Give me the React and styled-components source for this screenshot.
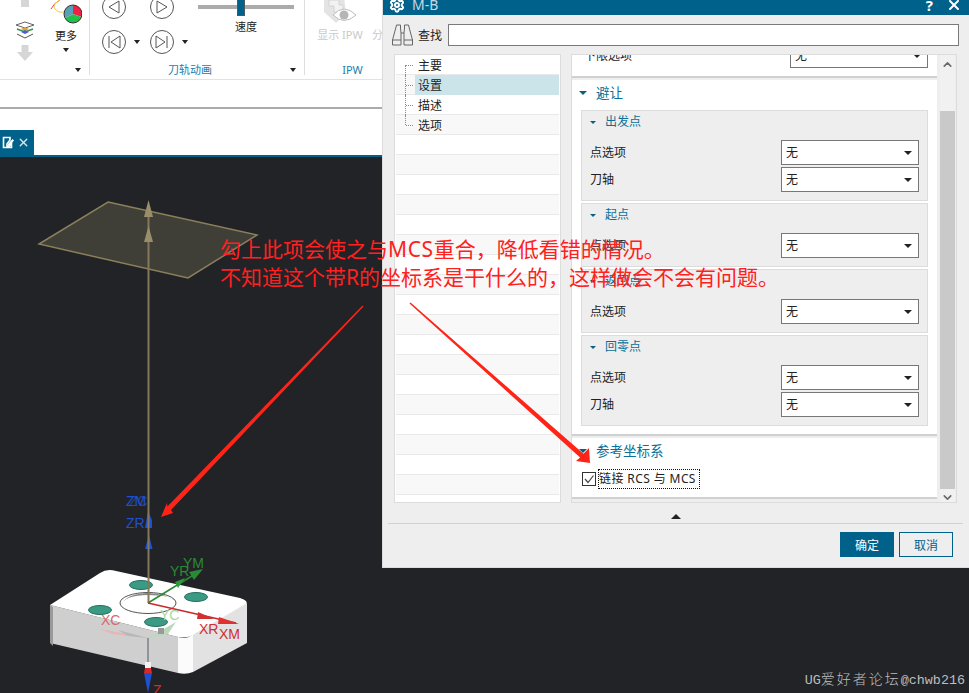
import React from 'react';
import styled, { createGlobalStyle } from 'styled-components';
import { Settings, X, ChevronUp, ChevronDown } from 'lucide-react';

const UI_FONT = '"Noto Sans", "Noto Sans CJK SC", sans-serif';
const BRAND = '#00618a';
const LINK = '#0b7096';

const GlobalStyle = createGlobalStyle`
  html, body {
    margin: 0;
    padding: 0;
    background: #fff;
  }
  body {
    font-family: ${UI_FONT};
    font-size: 12px;
    color: #222;
  }
`;

const Page = styled.div`
  position: relative;
  width: 969px;
  height: 693px;
  overflow: hidden;
  display: flex;
  flex-direction: column;
  background: #fff;
`;

/* ribbon */
const Ribbon = styled.div`
  flex: none;
  height: 79px;
  display: flex;
  align-items: flex-start;
  border-bottom: 1px solid #e2e2e2;
  overflow: hidden;
`;
const RibbonGroup = styled.div`
  flex: none;
  width: ${p => p.$width}px;
  height: 75px;
  box-sizing: border-box;
  display: flex;
  flex-direction: column;
  border-right: 1px solid #dedede;
`;
const GroupBody = styled.div`
  flex: none;
  height: 62px;
  display: flex;
  padding-left: ${p => p.$inset || 0}px;
`;
const GroupFooter = styled.div`
  flex: none;
  height: 13px;
  display: flex;
  align-items: center;
  padding-right: 8px;
  margin-top: 1px;
`;
const GroupLabel = styled.div`
  flex: 1;
  text-align: center;
  font-size: 11px;
  line-height: 13px;
  color: #1a80ae;
`;
const SmallCaret = styled.span`
  flex: none;
  display: block;
  width: 0;
  height: 0;
  border-left: 3.5px solid transparent;
  border-right: 3.5px solid transparent;
  border-top: 4px solid #222;
`;
const StackColumn = styled.div`
  width: 50px;
  display: flex;
  flex-direction: column;
  align-items: center;
  gap: 6px;
`;
const MoreColumn = styled.div`
  width: 32px;
  display: flex;
  flex-direction: column;
  align-items: center;
`;
const ToolText = styled.div`
  font-size: 11px;
  line-height: 16px;
  margin-top: ${p => p.$gap || 0}px;
  white-space: nowrap;
  color: ${p => (p.$muted ? '#c9c9c9' : '#222')};
`;
const MoreCaret = styled(SmallCaret)`
  margin-top: 4px;
`;
const MediaGrid = styled.div`
  width: 96px;
  margin-top: -5px;
  display: grid;
  grid-template-columns: 48px 48px;
  row-gap: 11px;
  align-content: start;
`;
const MediaCell = styled.div`
  height: 24px;
  display: flex;
  align-items: center;
  gap: 8px;
`;
const SliderColumn = styled.div`
  width: 96px;
  text-align: center;
`;
const SliderTrack = styled.div`
  position: relative;
  height: 4px;
  margin: 5px 0 10px;
  background: #ababab;
`;
const SliderThumb = styled.div`
  position: absolute;
  left: 39px;
  top: -12px;
  width: 6px;
  height: 21px;
  background: ${BRAND};
  border: 1px solid #4a5a62;
`;
const IpwColumn = styled.div`
  width: 48px;
  margin-left: 11px;
  display: flex;
  flex-direction: column;
  align-items: center;
`;
const SplitColumn = styled.div`
  margin-left: 8px;
  padding-top: 27px;
`;
const BlankStrip = styled.div`
  flex: none;
  height: 27px;
  border-bottom: 2px solid #ababab;
`;
const TabStrip = styled.div`
  flex: none;
  height: 46px;
  display: flex;
  align-items: flex-end;
  border-bottom: 2px solid ${BRAND};
`;
const ViewTab = styled.div`
  width: 34px;
  height: 25px;
  display: flex;
  align-items: center;
  gap: 2px;
  padding-left: 2px;
  box-sizing: border-box;
  background: ${BRAND};
  color: #d5e5ec;
`;

/* graphics window */
const Viewport = styled.div`
  flex: 1;
  min-height: 0;
  background: #222327;
`;
const SceneSvg = styled.svg`
  display: block;
`;
const SceneLabel = styled.text`
  font-family: "Liberation Sans", sans-serif;
  font-size: 14px;
  fill: ${p => p.$fill};
`;
const Watermark = styled.div`
  position: absolute;
  right: 4px;
  bottom: 3px;
  font-family: "Liberation Mono", "Noto Sans CJK SC", monospace;
  font-size: 13.4px;
  line-height: 18px;
  color: #bdbdbd;
  white-space: nowrap;
`;
const WatermarkCjk = styled.span`
  font-family: "Noto Sans CJK SC", sans-serif;
  font-weight: 300;
  font-size: 14px;
  letter-spacing: 2px;
`;

/* dialog */
const Dialog = styled.div`
  position: absolute;
  left: 382px;
  top: -13px;
  width: 587px;
  height: 581px;
  box-sizing: border-box;
  display: flex;
  flex-direction: column;
  background: #eeeeee;
  border-left: 1px solid #dcdcdc;
  border-bottom: 1px solid #dcdcdc;
`;
const TitleBar = styled.div`
  flex: none;
  height: 28px;
  box-sizing: border-box;
  display: flex;
  align-items: flex-start;
  padding: 10px 7px 0 6px;
  background: ${BRAND};
  color: #fff;
  overflow: hidden;
`;
const TitleText = styled.div`
  flex: 1;
  margin-left: 7px;
  font-size: 14px;
  line-height: 16px;
  color: #c4d9e3;
`;
const HelpMark = styled.div`
  margin-right: 13px;
  font-size: 15px;
  line-height: 16px;
  font-weight: 700;
`;
const FindRow = styled.div`
  flex: none;
  height: 22px;
  display: flex;
  align-items: center;
  margin: 9px 10px 8px 8px;
`;
const FindLabel = styled.div`
  margin: 0 6px 0 4px;
  font-size: 12px;
`;
const FindInput = styled.div`
  flex: 1;
  height: 22px;
  box-sizing: border-box;
  background: #fff;
  border: 1px solid #7a7a7a;
`;
const Panels = styled.div`
  flex: none;
  height: 449px;
  display: flex;
  margin-left: 11px;
  gap: 10px;
`;
const TreePanel = styled.div`
  flex: none;
  width: 167px;
  box-sizing: border-box;
  padding: 0 1px;
  background: #fff;
  border: 1px solid #dcdcdc;
  overflow: hidden;
`;
const TreeRow = styled.div`
  position: relative;
  height: 20px;
  box-sizing: border-box;
  padding-left: 22px;
  line-height: 21px;
  font-size: 12px;
  border-bottom: 1px solid #e9e9e9;
  background: ${p => (p.$odd ? '#f8f8f8' : '#fff')};
`;
const TreeLabel = styled.div`
  margin-left: -3px;
  padding-left: 3px;
  height: 20px;
  background: ${p => (p.$selected ? '#cbe4ea' : 'transparent')};
`;
const TreeBranch = styled.span`
  position: absolute;
  left: 9px;
  top: ${p => (p.$first ? 10 : 0)}px;
  height: ${p => (p.$first || p.$last ? 10 : 20)}px;
  width: 7px;
  border-left: 1px dotted #8a8a8a;
  &::after {
    content: '';
    position: absolute;
    left: 0;
    top: ${p => (p.$first ? 0 : 10)}px;
    width: 7px;
    border-top: 1px dotted #8a8a8a;
  }
`;
const ContentPanel = styled.div`
  flex: none;
  width: 386px;
  box-sizing: border-box;
  display: flex;
  background: #eee;
  border: 1px solid #dcdcdc;
  overflow: hidden;
`;
const Sections = styled.div`
  flex: none;
  width: 365px;
  display: flex;
  flex-direction: column;
  gap: 2px;
  overflow: hidden;
`;
const Section = styled.div`
  flex: none;
  background: #fff;
  border-bottom: 2px solid #d0d0d0;
  padding: 0 9px 8px;
`;
const CroppedRow = styled.div`
  margin-top: -12px;
  margin-left: 3px;
`;
const SectionHeader = styled.div`
  height: 24px;
  padding-bottom: 2px;
  display: flex;
  align-items: center;
  gap: 9px;
  margin-left: -2px;
  font-size: 13.5px;
  color: ${LINK};
`;
const Caret = styled.span`
  flex: none;
  display: block;
  width: 0;
  height: 0;
  margin-top: 2px;
  border-left: ${p => p.$size}px solid transparent;
  border-right: ${p => p.$size}px solid transparent;
  border-top: ${p => p.$size}px solid #0a5f80;
`;
const Groups = styled.div`
  margin-top: 4px;
  display: flex;
  flex-direction: column;
  gap: 2px;
`;
const Group = styled.div`
  background: #eeeeee;
  border: 1px solid #dcdcdc;
  padding: 0 8px 8px;
`;
const GroupHeader = styled.div`
  height: 20px;
  margin-bottom: 9px;
  display: flex;
  align-items: center;
  gap: 9px;
  font-size: 12px;
  color: ${LINK};
`;
const Rows = styled.div`
  display: flex;
  flex-direction: column;
  gap: 2px;
`;
const FieldRow = styled.div`
  height: 25px;
  display: flex;
  align-items: center;
  justify-content: space-between;
  font-size: 12px;
`;
const FieldLabel = styled.span`
  margin-top: -2px;
`;
const Select = styled.div`
  width: 138px;
  height: 25px;
  box-sizing: border-box;
  display: flex;
  align-items: center;
  justify-content: space-between;
  padding: 0 6px 2px 4px;
  background: #fff;
  border: 1px solid #777;
`;
const SelectCaret = styled.span`
  display: block;
  width: 0;
  height: 0;
  margin-top: 2px;
  border-left: 4px solid transparent;
  border-right: 4px solid transparent;
  border-top: 4px solid #222;
`;
const CheckRow = styled.div`
  height: 20px;
  margin-top: 5px;
  display: flex;
  align-items: center;
  gap: 2px;
  margin-left: 1px;
`;
const CheckBox = styled.div`
  width: 14px;
  height: 14px;
  box-sizing: border-box;
  border: 1px solid #333;
  background: #fff;
  display: flex;
  align-items: center;
  justify-content: center;
`;
const CheckLabel = styled.div`
  height: 20px;
  width: 102px;
  box-sizing: border-box;
  line-height: 18px;
  font-size: 12px;
  letter-spacing: 0.4px;
  border: 1px dotted #111;
  white-space: nowrap;
`;
const Scrollbar = styled.div`
  flex: none;
  width: 15px;
  margin-left: 3px;
  display: flex;
  flex-direction: column;
  align-items: center;
  background: #f1f1f1;
  color: #6a6a6a;
`;
const ScrollEnd = styled.div`
  flex: ${p => (p.$top ? '0 0 53px' : '1')};
  padding-top: ${p => (p.$top ? 3 : 2)}px;
`;
const ScrollThumb = styled.div`
  flex: none;
  width: 100%;
  height: 378px;
  background: #c9c9c9;
`;
const CollapseRow = styled.div`
  flex: none;
  height: 20px;
  display: flex;
  align-items: center;
  justify-content: center;
`;
const UpCaret = styled.span`
  display: block;
  width: 0;
  height: 0;
  margin-top: 7px;
  margin-right: 1px;
  border-left: 5px solid transparent;
  border-right: 5px solid transparent;
  border-bottom: 5px solid #222;
`;
const Divider = styled.div`
  flex: none;
  height: 1px;
  margin: 0 6px 0 5px;
  background: #d2d2d2;
`;
const ButtonRow = styled.div`
  flex: none;
  display: flex;
  justify-content: flex-end;
  gap: 5px;
  padding: 8px 16px 0 0;
`;
const Button = styled.div`
  width: 54px;
  height: 25px;
  box-sizing: border-box;
  display: flex;
  align-items: center;
  justify-content: center;
  font-size: 12px;
  border: 1px solid ${BRAND};
  background: ${p => (p.$primary ? BRAND : 'transparent')};
  color: ${p => (p.$primary ? '#fff' : BRAND)};
`;

/* overlay */
const Note = styled.div`
  position: absolute;
  left: 220px;
  top: 235px;
  font-family: "Noto Sans", "Noto Sans CJK SC", sans-serif;
  font-size: 21px;
  line-height: 28px;
  color: #ff2020;
  white-space: nowrap;
`;
const NoteLatin = styled.span`
  letter-spacing: 0.6px;
`;
const ArrowLayer = styled.svg`
  position: absolute;
  left: 0;
  top: 0;
  pointer-events: none;
`;

const StackIcon = () => (
  <svg width="22" height="18" viewBox="0 0 22 18" style={{ marginTop: 8 }}>
    <path d="M11 1 L20 4 L11 7 L2 4 Z" fill="#fff" stroke="#666" />
    <path d="M3 8 L11 11 L19 8" fill="none" stroke="#3d8f4e" strokeWidth="1.5" />
    <path d="M7 8 L11 6 L15 8 L11 10 Z" fill="#e0a040" />
    <path d="M7 11 L11 9 L15 11 L11 13 Z" fill="#4a5fd0" />
    <path d="M3 13 L11 17 L19 13" fill="none" stroke="#555" />
  </svg>
);

const GrayArrow = ({ up }) => (up ? (
  <svg width="16" height="7" viewBox="0 0 16 7">
    <rect x="4" y="0" width="8" height="7" fill="#d6d6d6" />
  </svg>
) : (
  <svg width="16" height="16" viewBox="0 0 16 16">
    <path d="M4.500 0 H11.500 V7 H16 L8 16 L0 7 H4.500 Z" fill="#d6d6d6" />
  </svg>
));

const PieIcon = () => (
  <svg width="32" height="24" viewBox="0 0 32 24">
    <path d="M1 9 Q4 3 10 0" fill="none" stroke="#ee3a55" strokeWidth="1" />
    <path d="M10 0 Q2 4 5 9 Q8 13 14 12" fill="none" stroke="#f2c94c" strokeWidth="1" />
    <path d="M23 14 L23 5 A9 9 0 0 1 31.500 17 Z" fill="#ee2244" />
    <path d="M23 14 L31.500 17 A9 9 0 0 1 15 18 Z" fill="#22c04a" />
    <path d="M23 14 L15 18 A9 9 0 0 1 23 5 Z" fill="#5a9fb8" />
    <circle cx="23" cy="14" r="9" fill="none" stroke="#333" />
  </svg>
);

const MediaIcon = ({ kind }) => (
  <svg width="24" height="24" viewBox="0 0 24 24" fill="none" stroke="#555" strokeWidth="1">
    <circle cx="12" cy="12" r="11.500" />
    {kind === 'back' && <path d="M17 6 L7 12 L17 18 Z" />}
    {kind === 'play' && <path d="M7 6 L17 12 L7 18 Z" />}
    {kind === 'first' && <path d="M18 6 L9 12 L18 18 Z M7 6 V18" />}
    {kind === 'last' && <path d="M6 6 L15 12 L6 18 Z M17 6 V18" />}
  </svg>
);

const IpwIcon = () => (
  <svg width="36" height="24" viewBox="0 0 36 24">
    <path d="M2 -4 H22 L24 14 L14 23 L2 12 Z" fill="#e4e4e4" />
    <path d="M7 0 H17 V5 H21 V12 H12 V6 H7 Z" fill="#f2f2f2" stroke="#d4d4d4" />
    <path d="M11 15 Q22 3 34 15 Q22 26 11 15 Z" fill="#fff" stroke="#bdbdbd" />
    <circle cx="22" cy="15" r="4.500" fill="#b5b5b5" />
  </svg>
);

const TabIcon = () => (
  <svg width="13" height="13" viewBox="0 0 13 13">
    <path d="M1.500 1.500 H8 V4 L5 8 V10 H7.500 L9.500 7.500 V11.500 H1.500 Z" fill="none" stroke="#fff" strokeWidth="1.600" />
    <path d="M6 8 L10.500 3 L12 4.500 L7.500 9.500 H6 Z" fill="#fff" />
  </svg>
);

const Binoculars = () => (
  <svg width="23" height="22" viewBox="0 0 22 22" fill="none" stroke="#666" strokeWidth="1">
    <path d="M5 1 H9 V4 L9.500 9 V21 H1 V16 L4 5 Z" />
    <path d="M17 1 H13 V4 L12.500 9 V21 H21 V16 L18 5 Z" />
    <path d="M1 16 H9.500 M12.500 16 H21 M9.500 9 H12.500" />
  </svg>
);

const Scene = () => (
  <SceneSvg width="969" height="536" viewBox="0 157 969 536">
    <path d="M108 202 L257 235 L188 278 L39 244 Z" fill="#3f3e37" stroke="#8b7f5c" strokeWidth="1.500" />

    {/* part */}
    <path d="M50 605 L50 643 L178 673 L178 637 Z" fill="#cfcfcf" />
    <path d="M50 605 L53 607 L53 646 L50 643 Z" fill="#9a9a9a" />
    <path d="M193 634 L247 603 L247 643 L193 672 Z" fill="#e2e2e2" />
    <path d="M178 637 Q187 640 193 634 L193 672 Q186 675 178 673 Z" fill="#fbfbfb" />
    <path d="M50 605 L100 573 Q107 568 116 571 L240 598 Q249 601 246 604 L196 633 Q188 639 178 637 Z" fill="#fff" />
    <ellipse cx="148" cy="603" rx="28" ry="10.500" fill="#fff" stroke="#555" strokeWidth="1" />
    <path d="M121 605 Q125 595 148 595 Q170 595 175 601 Q165 593 146 593 Q126 594 121 605 Z" fill="#888" />
    <ellipse cx="141" cy="585" rx="11.500" ry="4.500" fill="#3a9a84" stroke="#26705f" />
    <ellipse cx="196" cy="597" rx="11.500" ry="4.500" fill="#3a9a84" stroke="#26705f" />
    <ellipse cx="100" cy="610" rx="11.500" ry="4.500" fill="#3a9a84" stroke="#26705f" />
    <ellipse cx="156" cy="622" rx="11.500" ry="4.500" fill="#3a9a84" stroke="#26705f" />

    {/* z blue cones behind the rod */}
    <path d="M148 511 L152 520 L152 528 H145 Z" fill="#1f50d0" />
    <path d="M149 535 L152.500 549 H145 Z" fill="#1f50d0" />

    {/* plane normal */}
    <line x1="148.500" y1="210" x2="148.500" y2="603" stroke="#84795a" strokeWidth="2" />
    <path d="M148.500 200 L153 217 H144 Z" fill="#9a8e6a" />
    <path d="M148.500 226 L153 242 H144 Z" fill="#9a8e6a" />

    {/* green and red handles */}
    <line x1="148" y1="603" x2="200" y2="571" stroke="#2b8a34" strokeWidth="1.500" />
    <path d="M203 569 L189 572 L194 580 Z" fill="#2b8a34" />
    <path d="M185 578 L175 582 L178 588 Z" fill="#2f9a3a" />
    <line x1="148" y1="603" x2="236" y2="623" stroke="#c8282c" strokeWidth="1.500" />
    <path d="M239 624 L219 617 L218 624 Z" fill="#e03030" />
    <path d="M214 619 L198 612 L197 619 Z" fill="#d03030" />

    {/* work coordinates, faded */}
    <path d="M148 638 L100 629 L112 634 Z" fill="#e9b4b4" />
    <path d="M148 638 L118 630 L128 636 Z" fill="#b8b8b8" />
    <path d="M148 638 L176 622 L168 634 Z" fill="#bcd8bc" />
    <rect x="158" y="628" width="6" height="6" fill="#999" />
    <line x1="148" y1="638" x2="148" y2="663" stroke="#7c8088" strokeWidth="1.500" />
    <path d="M145 662 H151 L151 669 H145 Z" fill="#f2f2f2" />
    <path d="M145 668 H151 L152 673 H144 Z" fill="#d82828" />
    <path d="M144 673 H152 L148 693 Z" fill="#1f50d0" />

    <SceneLabel $fill="#1f50d0" x="126" y="506">ZM</SceneLabel>
    <SceneLabel $fill="#1f50d0" x="129" y="506" opacity="0.7">ZC</SceneLabel>
    <SceneLabel $fill="#1f50d0" x="126" y="528">ZR</SceneLabel>
    <SceneLabel $fill="#2b8a34" x="183" y="568">YM</SceneLabel>
    <SceneLabel $fill="#2b8a34" x="170" y="576">YR</SceneLabel>
    <SceneLabel $fill="#a7d8a7" x="160" y="620">YC</SceneLabel>
    <SceneLabel $fill="#d86a6a" x="101" y="625">XC</SceneLabel>
    <SceneLabel $fill="#cc3030" x="199" y="634">XR</SceneLabel>
    <SceneLabel $fill="#cc3030" x="219" y="639">XM</SceneLabel>
    <SceneLabel $fill="#d82828" x="153" y="695">Z</SceneLabel>
  </SceneSvg>
);

const Field = ({ label }) => (
  <FieldRow>
    <FieldLabel>{label}</FieldLabel>
    <Select>
      <span>无</span>
      <SelectCaret />
    </Select>
  </FieldRow>
);

const SubGroup = ({ title, fields }) => (
  <Group>
    <GroupHeader>
      <Caret $size={3.5} />
      {title}
    </GroupHeader>
    <Rows>
      {fields.map(f => <Field key={f} label={f} />)}
    </Rows>
  </Group>
);

const treeItems = ['主要', '设置', '描述', '选项'];
const stripes = Array.from({ length: 19 }, (_, i) => i);

const TreeList = () => (
  <TreePanel>
    {treeItems.map((item, i) => (
      <TreeRow key={item} $odd={i % 2 === 1}>
        <TreeBranch $first={i === 0} $last={i === treeItems.length - 1} />
        <TreeLabel $selected={item === '设置'}>{item}</TreeLabel>
      </TreeRow>
    ))}
    {stripes.map(i => <TreeRow key={i} $odd={i % 2 === 1} />)}
  </TreePanel>
);

const App = () => (
  <Page>
    <GlobalStyle />
    <Ribbon>
      <RibbonGroup $width={90}>
        <GroupBody>
          <StackColumn>
            <GrayArrow up />
            <StackIcon />
            <GrayArrow />
          </StackColumn>
          <MoreColumn>
            <PieIcon />
            <ToolText $gap={4}>更多</ToolText>
            <MoreCaret />
          </MoreColumn>
        </GroupBody>
        <GroupFooter>
          <GroupLabel />
          <SmallCaret />
        </GroupFooter>
      </RibbonGroup>
      <RibbonGroup $width={215}>
        <GroupBody $inset={12}>
          <MediaGrid>
            <MediaCell><MediaIcon kind="back" /></MediaCell>
            <MediaCell><MediaIcon kind="play" /></MediaCell>
            <MediaCell><MediaIcon kind="first" /><SmallCaret /></MediaCell>
            <MediaCell><MediaIcon kind="last" /><SmallCaret /></MediaCell>
          </MediaGrid>
          <SliderColumn>
            <SliderTrack><SliderThumb /></SliderTrack>
            <ToolText>速度</ToolText>
          </SliderColumn>
        </GroupBody>
        <GroupFooter>
          <GroupLabel>刀轨动画</GroupLabel>
          <SmallCaret />
        </GroupFooter>
      </RibbonGroup>
      <RibbonGroup $width={104}>
        <GroupBody>
          <IpwColumn>
            <IpwIcon />
            <ToolText $muted $gap={3}>显示 IPW</ToolText>
          </IpwColumn>
          <SplitColumn>
            <ToolText $muted>分</ToolText>
          </SplitColumn>
        </GroupBody>
        <GroupFooter>
          <GroupLabel>IPW</GroupLabel>
        </GroupFooter>
      </RibbonGroup>
    </Ribbon>
    <BlankStrip />
    <TabStrip>
      <ViewTab>
        <TabIcon />
        <X size={13} strokeWidth={2.5} />
      </ViewTab>
    </TabStrip>
    <Viewport>
      <Scene />
    </Viewport>
    <Watermark>
      UG
      <WatermarkCjk>爱好者论坛</WatermarkCjk>
      @chwb216
    </Watermark>

    <Dialog>
      <TitleBar>
        <Settings size={16} strokeWidth={3} />
        <TitleText>M-B</TitleText>
        <HelpMark>?</HelpMark>
        <X size={16} strokeWidth={3} />
      </TitleBar>
      <FindRow>
        <Binoculars />
        <FindLabel>查找</FindLabel>
        <FindInput />
      </FindRow>
      <Panels>
        <TreeList />
        <ContentPanel>
          <Sections>
            <Section>
              <CroppedRow>
                <Field label="下限选项" />
              </CroppedRow>
            </Section>
            <Section>
              <SectionHeader>
                <Caret $size={4.5} />
                避让
              </SectionHeader>
              <Groups>
                <SubGroup title="出发点" fields={['点选项', '刀轴']} />
                <SubGroup title="起点" fields={['点选项']} />
                <SubGroup title="返回点" fields={['点选项']} />
                <SubGroup title="回零点" fields={['点选项', '刀轴']} />
              </Groups>
            </Section>
            <Section>
              <SectionHeader>
                <Caret $size={4.5} />
                参考坐标系
              </SectionHeader>
              <CheckRow>
                <CheckBox>
                  <svg width="12" height="12" viewBox="0 0 12 12" fill="none" stroke="#444" strokeWidth="1.200">
                    <path d="M2 6 L5 9.500 L10.500 2.500" />
                  </svg>
                </CheckBox>
                <CheckLabel>链接 RCS 与 MCS</CheckLabel>
              </CheckRow>
            </Section>
          </Sections>
          <Scrollbar>
            <ScrollEnd $top><ChevronUp size={13} strokeWidth={3} /></ScrollEnd>
            <ScrollThumb />
            <ScrollEnd><ChevronDown size={13} strokeWidth={3} /></ScrollEnd>
          </Scrollbar>
        </ContentPanel>
      </Panels>
      <CollapseRow><UpCaret /></CollapseRow>
      <Divider />
      <ButtonRow>
        <Button $primary>确定</Button>
        <Button>取消</Button>
      </ButtonRow>
    </Dialog>

    <Note>
      勾上此项会使之与<NoteLatin>MCS</NoteLatin>重合，降低看错的情况。
      <br />
      不知道这个带R的坐标系是干什么的，这样做会不会有问题。
    </Note>
    <ArrowLayer width="969" height="693" viewBox="0 0 969 693">
      <path d="M363.500 306.500 L362.500 305.500 L167.400 506.600 L167 503 L161 517 L173 513 L171 510 Z" fill="#ff2418" />
      <path d="M409.500 303.500 L410.500 302.500 L583.500 453.800 L589 448 L590 463 L576 461 L580.100 457.600 Z" fill="#ff2418" />
    </ArrowLayer>
  </Page>
);

export default App;
